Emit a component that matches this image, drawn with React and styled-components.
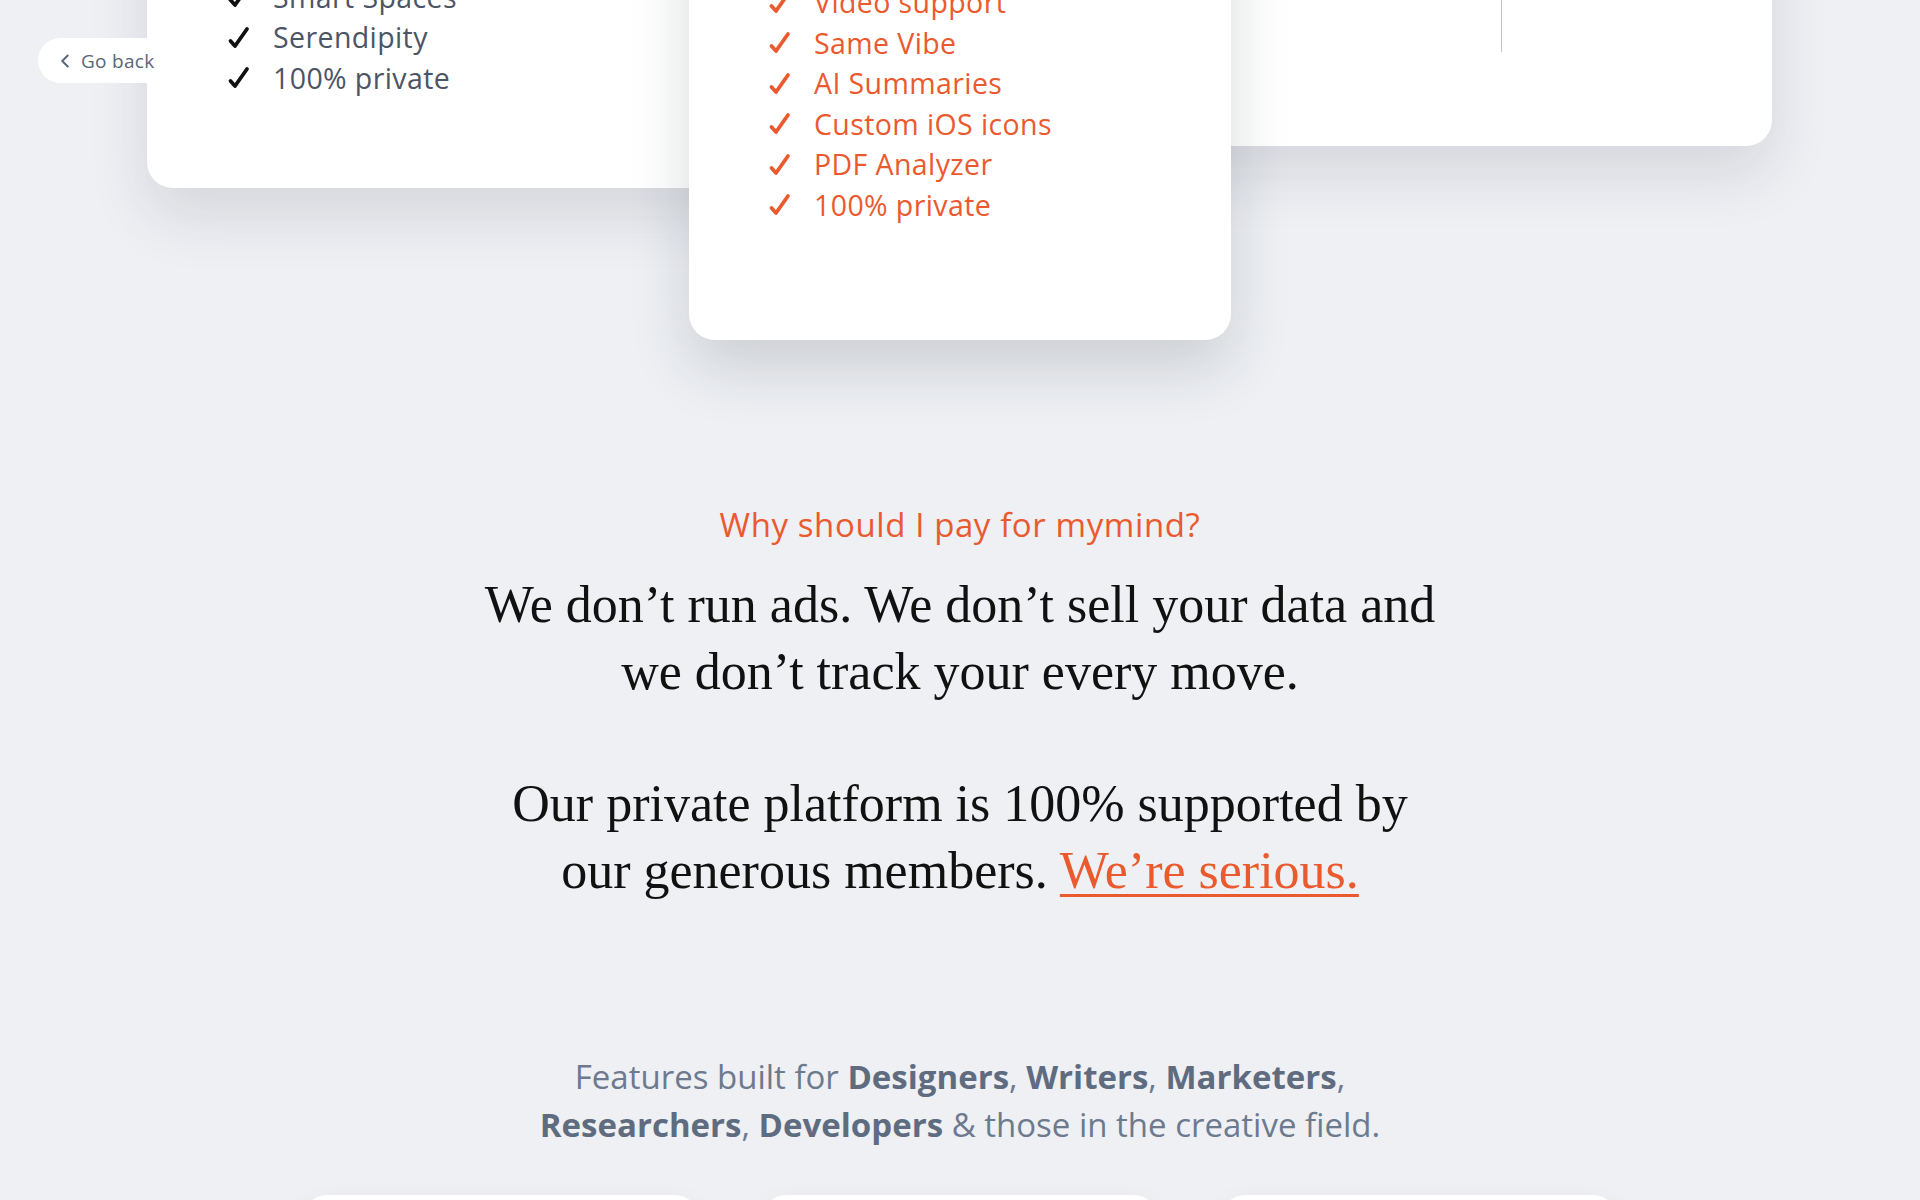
import React from 'react';
import styled, { createGlobalStyle } from 'styled-components';
import { ChevronLeft } from 'lucide-react';

const ORANGE = '#ea5a2e';

const GlobalStyle = createGlobalStyle`
  html, body {
    margin: 0;
    padding: 0;
    background: #eef0f4;
    overflow: hidden;
  }
  body {
    font-family: 'Open Sans', Lato, sans-serif;
    -webkit-font-smoothing: antialiased;
  }
  * {
    box-sizing: border-box;
  }
`;

const Page = styled.div`
  width: 1920px;
  min-height: 1200px;
`;

const BackButton = styled.a`
  position: fixed;
  top: 38px;
  left: 38px;
  z-index: 10;
  height: 45px;
  padding: 0 18px 0 16px;
  display: flex;
  align-items: center;
  gap: 5px;
  background: #fff;
  border-radius: 23px;
  font-size: 19px;
  letter-spacing: 0.3px;
  color: #5b6678;
  text-decoration: none;
`;

/* the page is scrolled past the plan headers, only the feature lists show */
const PlansRow = styled.div`
  display: flex;
  align-items: flex-start;
  margin-top: -520px;
  padding-left: 147px;
`;

const PlanCard = styled.div`
  position: relative;
  z-index: ${p => (p.$front ? 2 : 1)};
  width: ${p => p.$width}px;
  height: ${p => p.$height}px;
  margin-left: ${p => p.$shift || 0}px;
  background: #fff;
  border-radius: 26px;
  box-shadow: 0 28px 60px rgba(30, 36, 50, ${p => (p.$front ? 0.16 : 0.12)});
  display: flex;
  flex-direction: column;
  justify-content: flex-end;
  padding: 0 0 ${p => p.$padBottom}px ${p => p.$padLeft}px;
`;

const SplitCard = styled(PlanCard)`
  display: grid;
  grid-template-columns: 1fr 1px 1fr;
`;

const Divider = styled.div`
  background: #c4c4c4;
`;

const CheckList = styled.ul`
  list-style: none;
  margin: 0;
  padding: 0;
`;

const CheckItem = styled.li`
  display: flex;
  align-items: center;
  gap: 22px;
  height: 40.5px;
  font-size: 28.5px;
  letter-spacing: 0.4px;
  color: ${p => (p.$accent ? ORANGE : '#4c5564')};
  svg {
    flex: none;
  }
`;

const Tick = ({ color }) => (
  <svg width="24" height="23" viewBox="0 0 24 23">
    <path
      d="M3.5 15 L8 20 L20 3"
      fill="none"
      stroke={color}
      strokeWidth="3.8"
      strokeLinecap="round"
      strokeLinejoin="round"
    />
  </svg>
);

const WhySection = styled.section`
  margin-top: 165px;
  text-align: center;
`;

const Eyebrow = styled.p`
  margin: 0;
  font-size: 33px;
  line-height: 40px;
  letter-spacing: 0.6px;
  color: ${ORANGE};
`;

const Statement = styled.p`
  margin: ${p => p.$gap}px 0 0;
  font-family: 'Liberation Serif', 'Times New Roman', serif;
  font-size: 52px;
  line-height: 67px;
  color: #111;
`;

const SeriousLink = styled.a`
  color: ${ORANGE};
  text-decoration: underline;
  text-decoration-thickness: 3px;
  text-underline-offset: 6px;
`;

const Audience = styled.p`
  margin: 149px 0 0;
  text-align: center;
  font-size: 33px;
  line-height: 48px;
  color: #6d7a8e;
  strong {
    font-weight: 700;
    color: #5f6c80;
  }
`;

const FeatureGrid = styled.div`
  margin-top: 46px;
  display: grid;
  grid-template-columns: repeat(3, 396px);
  gap: 63px;
  justify-content: center;
`;

const FeatureCard = styled.div`
  height: 360px;
  background: #fff;
  border-radius: 24px;
  box-shadow: 0 10px 30px rgba(30, 36, 50, 0.06);
`;

const miniItems = ['Unlimited cards', 'Smart tags', 'Smart Spaces', 'Serendipity', '100% private'];
const proItems = [
  'Unlimited cards',
  'Video support',
  'Same Vibe',
  'AI Summaries',
  'Custom iOS icons',
  'PDF Analyzer',
  '100% private'
];

export default function App() {
  return (
    <Page>
      <GlobalStyle />
      <BackButton href="#">
        <ChevronLeft size={22} strokeWidth={2.2} />
        Go back
      </BackButton>

      <PlansRow>
        <PlanCard $width={613} $height={708} $padBottom={90} $padLeft={80}>
          <CheckList>
            {miniItems.map(item => (
              <CheckItem key={item}>
                <Tick color="#111" />
                {item}
              </CheckItem>
            ))}
          </CheckList>
        </PlanCard>
        <PlanCard $front $width={542} $height={860} $shift={-71} $padBottom={115} $padLeft={79}>
          <CheckList>
            {proItems.map(item => (
              <CheckItem key={item} $accent>
                <Tick color={ORANGE} />
                {item}
              </CheckItem>
            ))}
          </CheckList>
        </PlanCard>
        <SplitCard $width={622} $height={666} $shift={-81} $padBottom={94} $padLeft={81}>
          <div />
          <Divider />
          <div />
        </SplitCard>
      </PlansRow>

      <WhySection>
        <Eyebrow>Why should I pay for mymind?</Eyebrow>
        <Statement $gap={26}>
          We don’t run ads. We don’t sell your data and
          <br />
          we don’t track your every move.
        </Statement>
        <Statement $gap={65}>
          Our private platform is 100% supported by
          <br />
          our generous members. <SeriousLink href="#">We’re serious.</SeriousLink>
        </Statement>
      </WhySection>

      <Audience>
        Features built for <strong>Designers</strong>, <strong>Writers</strong>,{' '}
        <strong>Marketers</strong>,
        <br />
        <strong>Researchers</strong>, <strong>Developers</strong> &amp; those in the creative field.
      </Audience>

      <FeatureGrid>
        <FeatureCard />
        <FeatureCard />
        <FeatureCard />
      </FeatureGrid>
    </Page>
  );
}
